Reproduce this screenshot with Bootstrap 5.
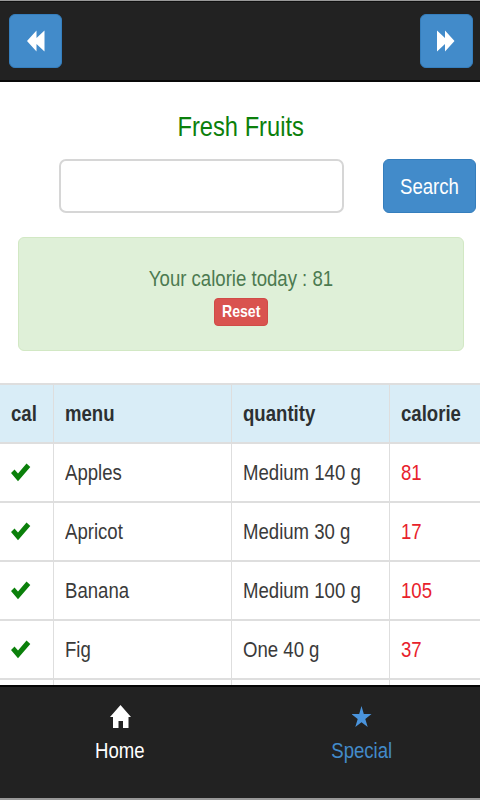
<!DOCTYPE html>
<html lang="en">
<head>
<meta charset="utf-8">
<meta name="viewport" content="width=device-width, initial-scale=1">
<title>Fresh Fruits</title>
<link href="https://cdn.jsdelivr.net/npm/bootstrap@5.3.0/dist/css/bootstrap.min.css" rel="stylesheet">
<style>
body{height:800px;font-family:"Liberation Sans",Arial,sans-serif;font-size:22.4px;line-height:32px;color:#3a3a3a;background:#fff}
.narrow{display:inline-block;white-space:nowrap;transform:scaleX(.83)}
.from-left{transform-origin:0 50%}
.topbar{height:82px;padding:13px 7px 0 9px;background:#222;border-top:1px solid #999;border-bottom:2px solid #090909;box-shadow:inset 0 1px #101010}
.btn-blue{--bs-btn-color:#fff;--bs-btn-bg:#428bca;--bs-btn-border-color:#357ebd;--bs-btn-hover-color:#fff;--bs-btn-hover-bg:#3276b1;--bs-btn-border-radius:6px;--bs-btn-font-size:22.4px;height:54px;border-width:1px}
.btn-step{width:53px}
.page-title{height:77px;padding:28px 0 0 2px;font-size:28px;line-height:34px;color:#0b800b}
.page-title .narrow{transform:scaleX(.847)}
.search-row{padding:0 4px 0 59px}
.search-row .form-control{width:285px;height:54px;border:2px solid #d6d6d6;border-radius:7px}
.btn-search{width:93px}
.btn-search .narrow{margin-top:1px}
.total{height:114px;margin:24px 16px 32px 18px;padding:24px 0 0;border:1px solid #d2e8c4;border-radius:6px;background:#dff0d8;color:#4c7a50}
.total-text{line-height:34px}
.btn-reset{width:54px;height:28px;font-size:17px;font-weight:700;line-height:26px;border-radius:4px;background:#d9534f;border:1px solid #d04b47;color:#fff;margin-top:2px}
.foods{table-layout:fixed;--bs-table-color:#3a3a3a}
.foods th,.foods td{height:59px;padding:1px 0 0 11px;vertical-align:middle;border:0 solid #dedede;border-top-width:2px;border-right-width:1px;box-shadow:none}
.foods th{background:#d9edf7;color:#2c3032}
.foods tr>:last-child{border-right-width:0}
.foods tr>:first-child{padding-left:11px}
.foods tbody td:first-child{padding-bottom:3px}
.foods .kcal{color:#e8212b}
.tail td{height:7px!important;padding:0!important}
.c1{width:53px}.c2{width:178px}.c3{width:158px}
.bottombar{height:115px;background:#222;border-top:2px solid #050505;border-bottom:2px solid #999;padding-top:17px}
.bottombar .nav-link{padding:0;color:#428bca}
.bottombar .nav-link.active{color:#fff}
.bottombar .nav-link:last-child{padding-left:4px}
.bottombar svg{display:block;margin:0 auto 6px}
</style>
<script src="https://cdn.jsdelivr.net/npm/bootstrap@5.3.0/dist/js/bootstrap.bundle.min.js"></script>
</head>
<body class="d-flex flex-column overflow-hidden">
<header class="topbar d-flex justify-content-between flex-shrink-0">
  <button class="btn btn-blue btn-step p-0 d-flex align-items-center justify-content-center" aria-label="Previous"><svg width="21" height="22" viewBox="0 0 21 22" fill="#fff"><path d="M2 11 11.500.5V8l8-7.500v21l-8-7.500v7.500z"/></svg></button>
  <button class="btn btn-blue btn-step p-0 d-flex align-items-center justify-content-center" aria-label="Next"><svg width="21" height="22" viewBox="0 0 21 22" fill="#fff"><path d="M18.500 11 9 .5V8L1 .5v21L9 14v7.500z"/></svg></button>
</header>
<main class="flex-grow-1 overflow-hidden">
  <h1 class="page-title text-center fw-normal m-0"><span class="narrow">Fresh Fruits</span></h1>
  <div class="search-row d-flex justify-content-between">
    <input class="form-control shadow-none" type="text" aria-label="Search foods">
    <button class="btn btn-blue btn-search p-0"><span class="narrow">Search</span></button>
  </div>
  <div class="total alert text-center">
    <div class="total-text"><span class="narrow">Your calorie today : 81</span></div>
    <button class="btn btn-reset p-0 d-block mx-auto"><span class="narrow">Reset</span></button>
  </div>
  <table class="table foods mb-0">
    <colgroup><col class="c1"><col class="c2"><col class="c3"><col></colgroup>
    <thead><tr><th><span class="narrow from-left">cal</span></th><th><span class="narrow from-left">menu</span></th><th><span class="narrow from-left">quantity</span></th><th><span class="narrow from-left">calorie</span></th></tr></thead>
    <tbody>
      <tr><td><svg class="d-block" width="20" height="20"><use href="#check"/></svg></td><td><span class="narrow from-left">Apples</span></td><td><span class="narrow from-left">Medium 140 g</span></td><td class="kcal"><span class="narrow from-left">81</span></td></tr>
      <tr><td><svg class="d-block" width="20" height="20"><use href="#check"/></svg></td><td><span class="narrow from-left">Apricot</span></td><td><span class="narrow from-left">Medium 30 g</span></td><td class="kcal"><span class="narrow from-left">17</span></td></tr>
      <tr><td><svg class="d-block" width="20" height="20"><use href="#check"/></svg></td><td><span class="narrow from-left">Banana</span></td><td><span class="narrow from-left">Medium 100 g</span></td><td class="kcal"><span class="narrow from-left">105</span></td></tr>
      <tr><td><svg class="d-block" width="20" height="20"><use href="#check"/></svg></td><td><span class="narrow from-left">Fig</span></td><td><span class="narrow from-left">One 40 g</span></td><td class="kcal"><span class="narrow from-left">37</span></td></tr>
      <tr class="tail"><td></td><td></td><td></td><td></td></tr>
    </tbody>
  </table>
</main>
<nav class="bottombar row g-0 text-center flex-shrink-0 align-items-start">
  <a class="nav-link active col-6" href="#"><svg width="21" height="25" viewBox="0 0 21 25" fill="#fff"><path d="M10.500 1 21 13h-2.500v11H13v-7H8.500v7H3V13H0z"/></svg><span class="narrow">Home</span></a>
  <a class="nav-link col-6" href="#"><svg width="20" height="25" viewBox="0 0 20 25" fill="#4a94dc"><path d="m9.500 2 2.300 8h7.700l-6.200 5 2.400 8-6.200-4.800L3.300 23l2.400-8L-.5 10h7.700z"/></svg><span class="narrow">Special</span></a>
</nav>
<svg class="d-none"><symbol id="check" viewBox="0 0 20 20"><path fill="#0b800b" d="m0 11 3.500-3.500L7 11.500 15.500 1.500 19.300 5 7 19.300z"/></symbol></svg>
</body>
</html>
